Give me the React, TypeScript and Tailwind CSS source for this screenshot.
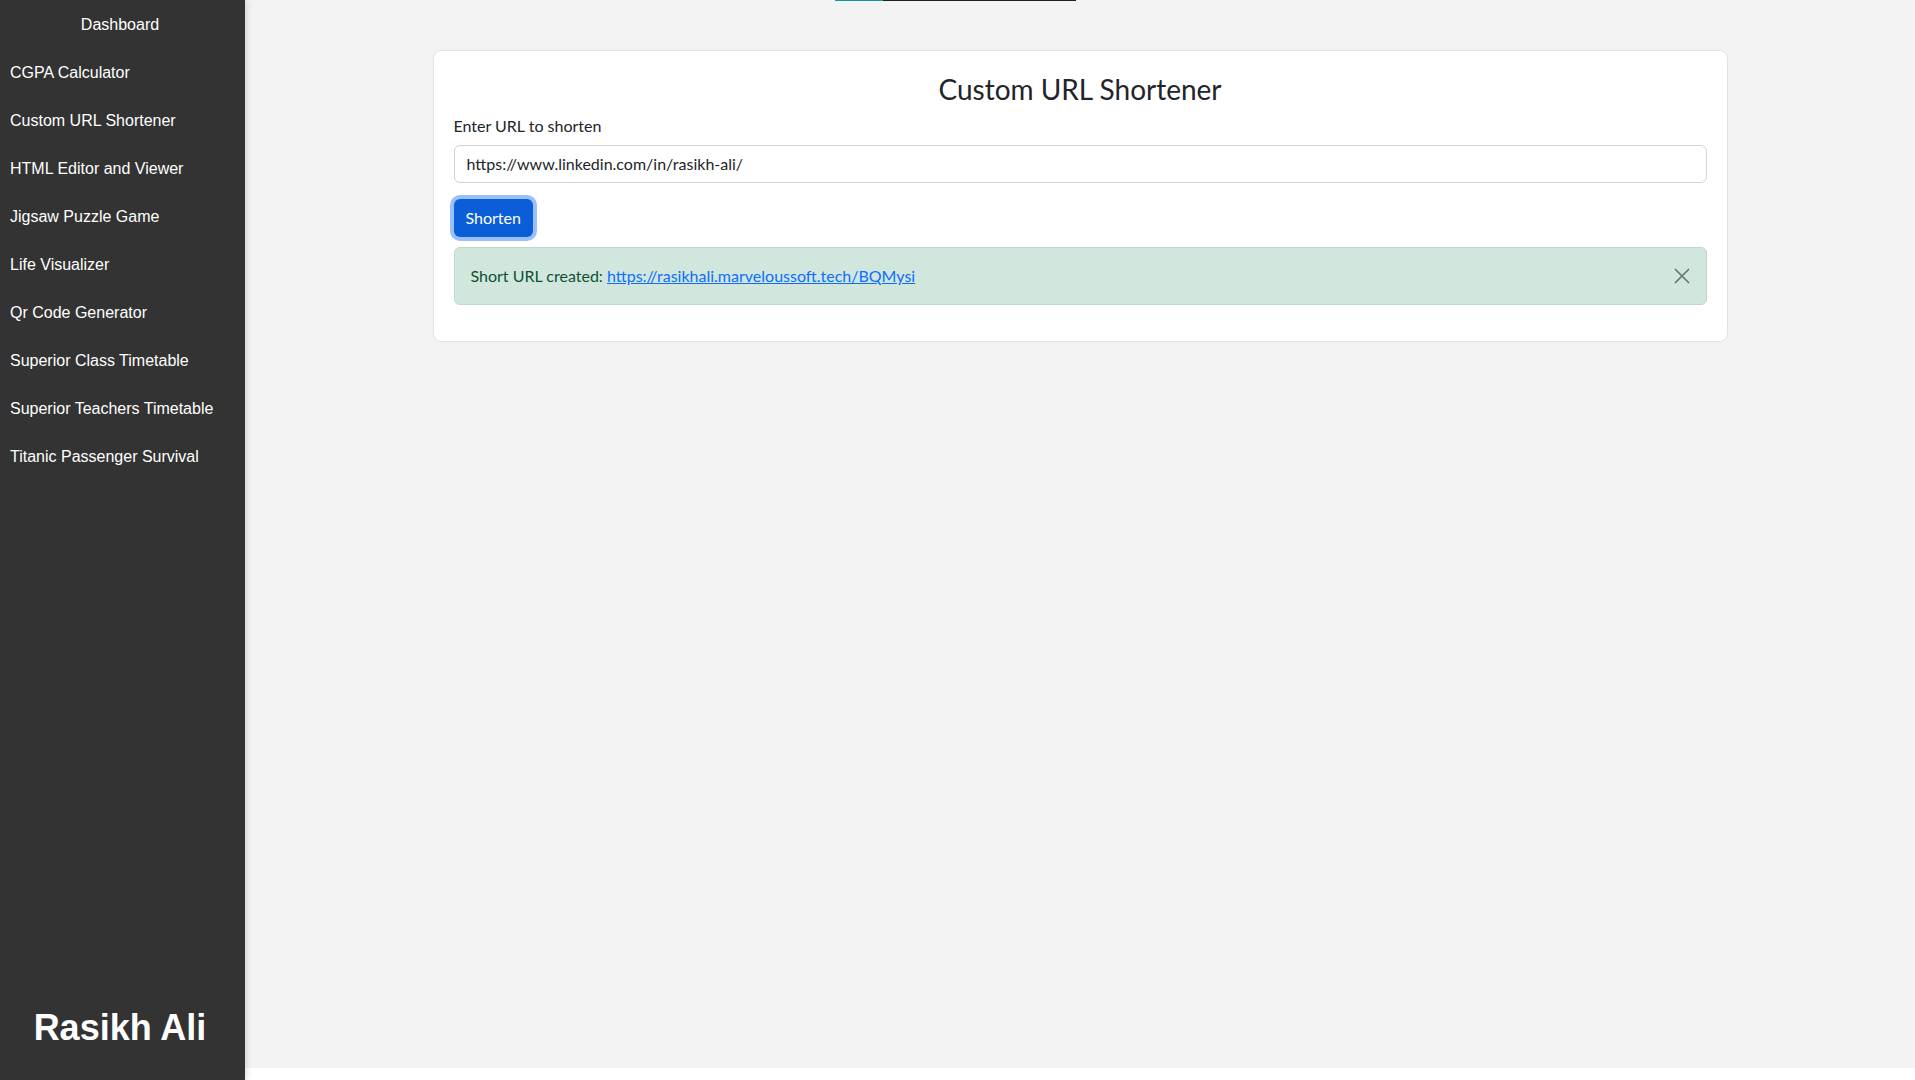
import React from "react";

const LINKS = [
  "CGPA Calculator",
  "Custom URL Shortener",
  "HTML Editor and Viewer",
  "Jigsaw Puzzle Game",
  "Life Visualizer",
  "Qr Code Generator",
  "Superior Class Timetable",
  "Superior Teachers Timetable",
  "Titanic Passenger Survival",
];

function Sidebar() {
  return (
    <aside className="relative z-10 flex h-[1080px] w-[245px] shrink-0 flex-col justify-between bg-[#333333] text-white shadow-[2px_0_6px_rgba(0,0,0,0.12)] [font-family:'Liberation_Sans',Arial,sans-serif]">
      <nav className="flex flex-col pt-[1px]">
        <a className="flex h-12 items-center justify-center pr-[5px] text-base">Dashboard</a>
        {LINKS.map((label) => (
          <a key={label} className="flex h-12 items-center px-[10px] text-base">
            {label}
          </a>
        ))}
      </nav>
      <div className="pb-8 pr-[5px] text-center text-[36px] font-bold leading-[41px]">Rasikh Ali</div>
    </aside>
  );
}

function CloseIcon() {
  return (
    <svg width="16" height="16" viewBox="0 0 16 16" className="opacity-50">
      <path d="M1 1 L15 15 M15 1 L1 15" stroke="#000" strokeWidth="1.6" fill="none" />
    </svg>
  );
}

export default function App() {
  return (
    <div className="flex h-[1080px] w-[1915px] overflow-hidden bg-white">
      <Sidebar />
      <main className="flex-1">
        <div className="h-[1068px] bg-[#f3f3f3] [font-family:Lato,'Noto_Sans',sans-serif]">
          <div className="flex h-px pl-[590px]">
            <div className="w-12 bg-[#0f9a9e]" />
            <div className="w-[193px] bg-[#1f1f1f]" />
          </div>
          <section className="mx-auto mt-[49px] w-[1295px] rounded-lg border border-[#dee2e6] bg-white p-5 text-[#212529]">
            <h3 className="mb-[7px] mt-[2px] text-center text-[28px] leading-[1.2]">Custom URL Shortener</h3>
            <label className="mb-[7px] block text-base leading-6">Enter URL to shorten</label>
            <input
              readOnly
              defaultValue="https://www.linkedin.com/in/rasikh-ali/"
              className="block h-[38px] w-full rounded-md border border-[#ced4da] bg-white px-3 text-base text-[#212529] outline-none"
            />
            <button className="mt-4 h-[38px] rounded-md bg-[#0b5ed7] px-3 text-base text-white ring-4 ring-[#98c0fb]">
              Shorten
            </button>
            <div className="mb-4 mt-[10px] flex items-center justify-between rounded-md border border-[#badbcc] bg-[#d1e7dd] p-4 leading-6 text-[#0f5132]">
              <span>
                Short URL created:{" "}
                <a className="text-[#0d6efd] underline">https://rasikhali.marveloussoft.tech/BQMysi</a>
              </span>
              <CloseIcon />
            </div>
          </section>
        </div>
      </main>
    </div>
  );
}
